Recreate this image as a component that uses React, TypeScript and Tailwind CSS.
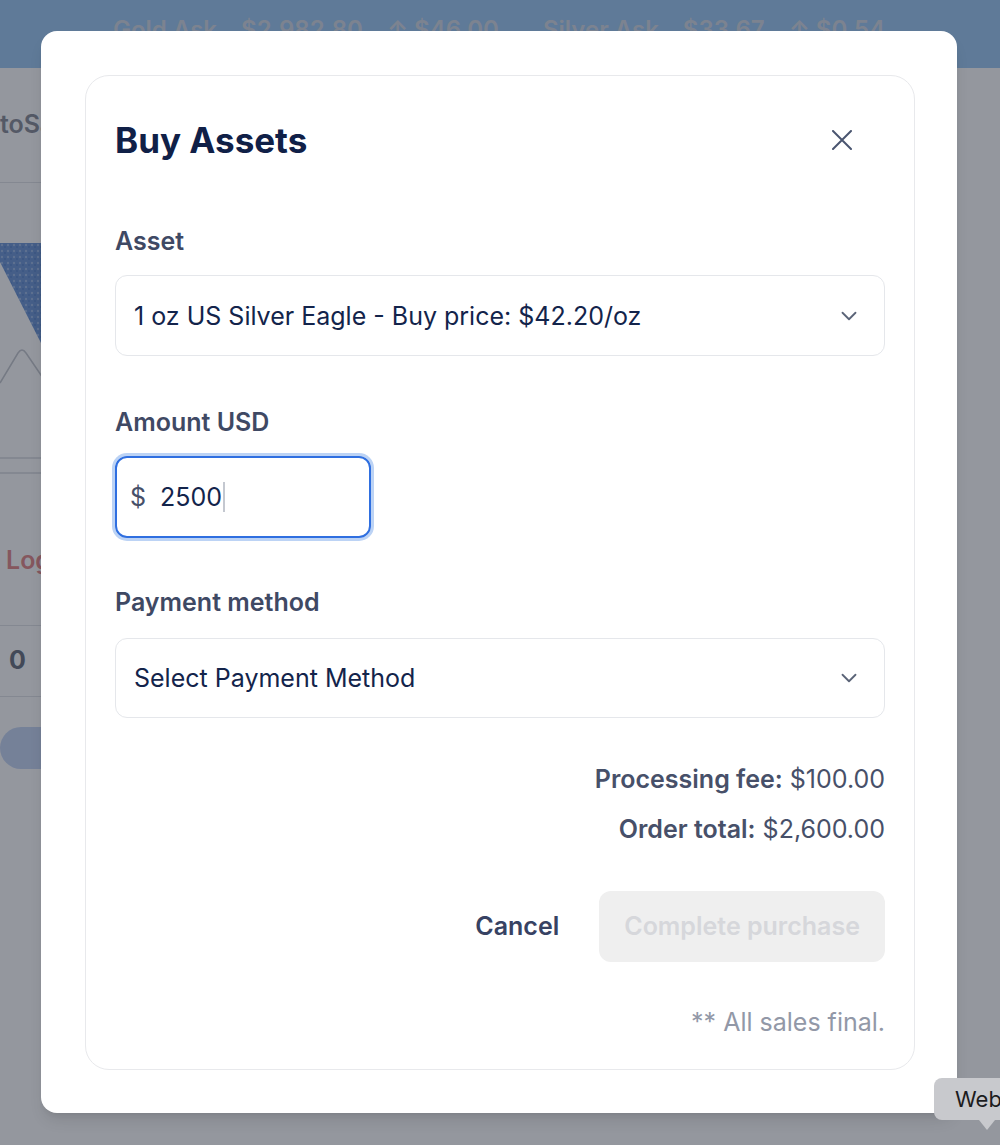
import { ChevronDown } from 'lucide-react'

const ticker = [
  { label: 'Gold Ask', price: '$2,982.80', change: '$46.00' },
  { label: 'Silver Ask', price: '$33.67', change: '$0.54' },
]

function PageBehind() {
  return (
    <div className="flex flex-col">
      <div className="flex h-[68px] items-start gap-[44px] bg-[#9fcaf4] pl-[113px] pt-[12px] text-[24px] font-semibold text-[#d3dbe6]">
        {ticker.map((t) => (
          <div key={t.label} className="flex gap-[24px]">
            <span>{t.label}</span>
            <span>{t.price}</span>
            <span>↑ {t.change}</span>
          </div>
        ))}
      </div>
      <div className="w-[240px]">
        <div className="flex h-[115px] items-center border-b border-[#e2e4e8] text-[25px] font-semibold text-[#8b8f99]">
          toSafe
        </div>
        <div className="h-[60px]" />
        <svg width="240" height="240" viewBox="0 0 240 240" className="block">
          <defs>
            <pattern id="tex" width="6" height="6" patternUnits="userSpaceOnUse">
              <rect width="6" height="6" fill="#6f98d8" />
              <circle cx="2" cy="2" r="1.2" fill="#9db9e6" />
              <circle cx="5" cy="4" r="0.9" fill="#5a86cc" />
            </pattern>
          </defs>
          <polygon points="0,0 240,0 240,200 41,100 0,19" fill="url(#tex)" />
          <path d="M0 140 L18 110 Q22 104 26 110 L60 160" fill="none" stroke="#c7cad0" strokeWidth="1.5" />
          <line x1="0" y1="215" x2="240" y2="215" stroke="#d8dbe0" strokeWidth="1.5" />
          <line x1="0" y1="230" x2="240" y2="230" stroke="#d8dbe0" strokeWidth="1.5" />
        </svg>
        <div className="flex h-[142px] flex-col justify-end pb-[46px] pl-[6px] text-[25px] font-semibold text-[#e38a8a]">
          Logout
        </div>
        <div className="flex h-[72px] items-center border-y border-[#e2e4e8] pl-[9px] text-[25px] font-bold text-[#6b7280]">
          0
        </div>
        <div className="mt-[30px] h-[42px] w-[120px] rounded-full bg-[#c7d7f5]" />
      </div>
    </div>
  )
}

export default function App() {
  return (
    <div className="relative h-[1145px] w-full overflow-hidden bg-white font-['Inter',sans-serif]">
      <PageBehind />

      <div className="absolute inset-0 bg-[#111827]/[0.45] pl-[41px] pr-[43px] pt-[31px]">
        <div className="h-[1082px] rounded-2xl bg-white pb-[43px] pl-[44px] pr-[42px] pt-[44px] shadow-lg">
          <div className="flex h-full flex-col rounded-3xl border border-[#e8e9ec] px-[29px] pt-[42px]">
            <div className="flex items-center justify-between">
              <h2 className="text-[35px] font-bold leading-[44px] text-[#102047]">Buy Assets</h2>
              <button className="mr-[33px] flex h-[20px] w-[20px] items-center justify-center">
                <svg width="20" height="20" viewBox="0 0 20 20">
                  <path d="M1 1 L19 19 M19 1 L1 19" stroke="#4a5570" strokeWidth="2" strokeLinecap="round" />
                </svg>
              </button>
            </div>

            <label className="mt-[64px] text-[25px] font-semibold leading-[30px] text-[#3f4964]">Asset</label>
            <div className="mt-[19px] flex h-[81px] items-center justify-between rounded-xl border border-[#e5e7eb] pl-[18px] pr-[22px]">
              <span className="text-[25px] leading-[30px] text-[#13244b]">1 oz US Silver Eagle - Buy price: $42.20/oz</span>
              <ChevronDown size={26} strokeWidth={1.7} className="text-[#5b6478]" />
            </div>

            <label className="mt-[51px] text-[25px] font-semibold leading-[30px] text-[#3f4964]">Amount USD</label>
            <div className="mt-[19px] flex h-[82px] w-[256px] items-center rounded-xl border-2 border-[#2f6fe0] pl-[13px] ring-[3px] ring-[#bcd3f5]">
              <span className="text-[25px] leading-[30px] text-[#475069]">$</span>
              <span className="ml-[14px] text-[25px] leading-[30px] text-[#13244b]">2500</span>
              <span className="ml-[1px] h-[30px] w-[2px] bg-[#c4c8d0]" />
            </div>

            <label className="mt-[49px] text-[25px] font-semibold leading-[30px] text-[#3f4964]">Payment method</label>
            <div className="mt-[21px] flex h-[80px] items-center justify-between rounded-xl border border-[#e5e7eb] pl-[18px] pr-[22px]">
              <span className="text-[25px] leading-[30px] text-[#13244b]">Select Payment Method</span>
              <ChevronDown size={26} strokeWidth={1.7} className="text-[#5b6478]" />
            </div>

            <div className="mt-[46px] flex flex-col items-end gap-[20px] text-[25px] leading-[30px] text-[#475069]">
              <p>
                <span className="font-semibold">Processing fee:</span> $100.00
              </p>
              <p>
                <span className="font-semibold">Order total:</span> $2,600.00
              </p>
            </div>

            <div className="mt-[47px] flex items-center justify-end gap-[40px]">
              <button className="text-[25px] font-semibold text-[#374263]">Cancel</button>
              <button disabled className="h-[71px] rounded-xl bg-[#efefef] px-[25px] text-[25px] font-semibold text-[#d6d7db]">
                Complete purchase
              </button>
            </div>

            <p className="mt-[45px] text-right text-[25px] leading-[30px] text-[#9298a7]">** All sales final.</p>
          </div>
        </div>
      </div>

      <div className="absolute left-[934px] top-[1078px]">
        <div className="flex h-[42px] w-[90px] items-center rounded-lg bg-[#c8c9cd] pl-[21px] text-[22px] text-[#1c1c1e]">
          Web
        </div>
        <div className="ml-[45px] h-0 w-0 border-x-[8px] border-t-[10px] border-x-transparent border-t-[#c8c9cd]" />
      </div>
    </div>
  )
}
